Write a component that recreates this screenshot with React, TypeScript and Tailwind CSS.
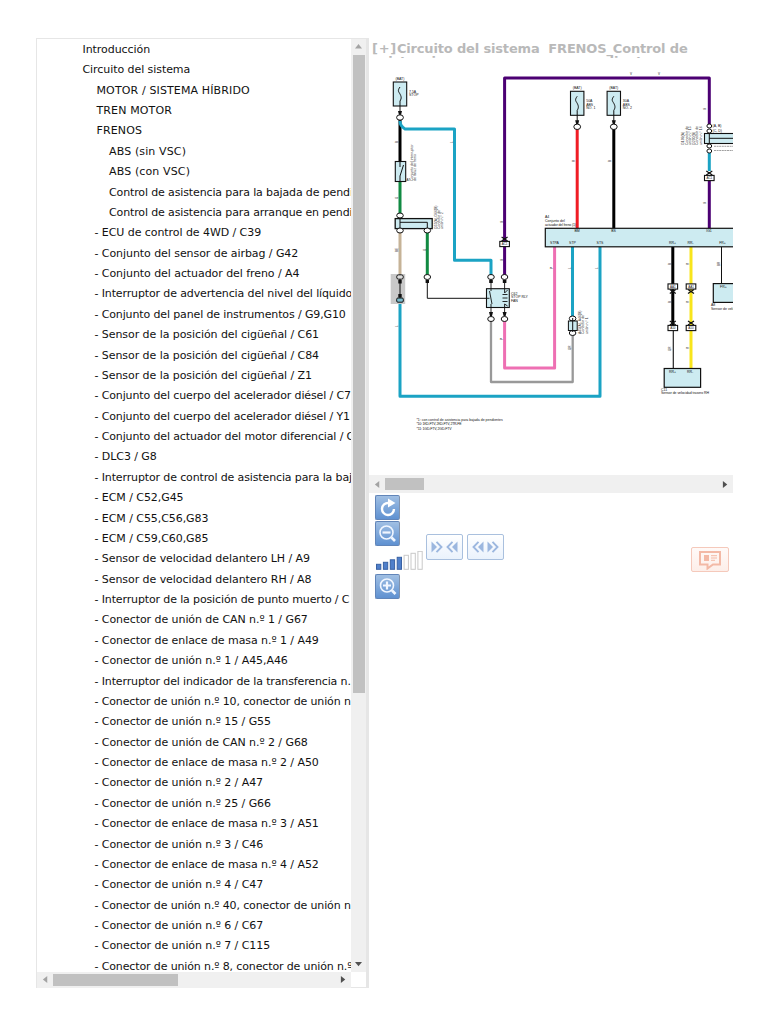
import { clsx } from "clsx";

interface TreeItem {
  label: string;
  level: 0 | 1 | 2 | 3;
}

const sections: TreeItem[] = [
  { label: "Introducción", level: 0 },
  { label: "Circuito del sistema", level: 0 },
  { label: "MOTOR / SISTEMA HÍBRIDO", level: 1 },
  { label: "TREN MOTOR", level: 1 },
  { label: "FRENOS", level: 1 },
  { label: "ABS (sin VSC)", level: 2 },
  { label: "ABS (con VSC)", level: 2 },
  { label: "Control de asistencia para la bajada de pendi", level: 2 },
  { label: "Control de asistencia para arranque en pendi", level: 2 },
];

const parts = [
  "ECU de control de 4WD / C39",
  "Conjunto del sensor de airbag / G42",
  "Conjunto del actuador del freno / A4",
  "Interruptor de advertencia del nivel del líquido",
  "Conjunto del panel de instrumentos / G9,G10",
  "Sensor de la posición del cigüeñal / C61",
  "Sensor de la posición del cigüeñal / C84",
  "Sensor de la posición del cigüeñal / Z1",
  "Conjunto del cuerpo del acelerador diésel / C7",
  "Conjunto del cuerpo del acelerador diésel / Y1",
  "Conjunto del actuador del motor diferencial / C",
  "DLC3 / G8",
  "Interruptor de control de asistencia para la baj",
  "ECM / C52,G45",
  "ECM / C55,C56,G83",
  "ECM / C59,C60,G85",
  "Sensor de velocidad delantero LH / A9",
  "Sensor de velocidad delantero RH / A8",
  "Interruptor de la posición de punto muerto / C",
  "Conector de unión de CAN n.º 1 / G67",
  "Conector de enlace de masa n.º 1 / A49",
  "Conector de unión n.º 1 / A45,A46",
  "Interruptor del indicador de la transferencia n.",
  "Conector de unión n.º 10, conector de unión n",
  "Conector de unión n.º 15 / G55",
  "Conector de unión de CAN n.º 2 / G68",
  "Conector de enlace de masa n.º 2 / A50",
  "Conector de unión n.º 2 / A47",
  "Conector de unión n.º 25 / G66",
  "Conector de enlace de masa n.º 3 / A51",
  "Conector de unión n.º 3 / C46",
  "Conector de enlace de masa n.º 4 / A52",
  "Conector de unión n.º 4 / C47",
  "Conector de unión n.º 40, conector de unión n",
  "Conector de unión n.º 6 / C67",
  "Conector de unión n.º 7 / C115",
  "Conector de unión n.º 8, conector de unión n.º",
];

const items: TreeItem[] = [...sections, ...parts.map((p): TreeItem => ({ label: `- ${p}`, level: 3 }))];

const levelClass = {
  0: "pl-[45.5px]",
  1: "pl-[59.5px]",
  2: "pl-[72px]",
  3: "pl-[57.5px]",
};

// headings in capitals are set a little wider, long rows that run to the edge a little tighter
function trackingFor({ level, label }: TreeItem) {
  if (level === 1 || label.startsWith("ABS")) return "tracking-[0.13px]";
  if (label.length > 43) return "tracking-[-0.13px]";
  return "tracking-[-0.065px]";
}

function Arrow({ dir, color }: { dir: "up" | "down" | "left" | "right"; color: string }) {
  const d = {
    up: "M0 5 4 0 8 5Z",
    down: "M0 1 8 1 4 6Z",
    left: "M6 0 6 8 1 4Z",
    right: "M1 0 1 8 6 4Z",
  };
  return (
    <svg className="h-[7px] w-[7px] shrink-0" viewBox="0 0 8 8" fill={color}>
      <path d={d[dir]} />
    </svg>
  );
}

function TreePanel() {
  return (
    <aside className="flex h-[950px] w-[333px] shrink-0 flex-col border border-r-[3px] border-[#e6e6e6]">
      <div className="flex h-[933px]">
        <ul className="w-[314px] shrink-0 overflow-hidden whitespace-pre pt-[0.4px] text-[11px] text-[#111]">
          {items.map((item, i) => (
            <li key={i} className={clsx("h-[20.38px] leading-[21px]", levelClass[item.level], trackingFor(item))}>
              {item.label}
            </li>
          ))}
        </ul>
        <div className="flex w-4 flex-col items-center bg-[#f0f0f0]">
          <div className="flex h-4 items-center pt-0.5">
            <Arrow dir="up" color="#a3a3a3" />
          </div>
          <div className="h-[638px] w-3 bg-[#c1c1c1]" />
          <div className="mt-auto mb-[4px]">
            <Arrow dir="down" color="#505050" />
          </div>
        </div>
      </div>
      <div className="flex h-4 items-center">
        <div className="flex h-4 w-[314px] items-center bg-[#f0f0f0]">
          <div className="flex w-4 justify-center">
            <Arrow dir="left" color="#a3a3a3" />
          </div>
          <div className="h-3 w-[125px] bg-[#c1c1c1]" />
          <div className="mr-1 ml-auto">
            <Arrow dir="right" color="#505050" />
          </div>
        </div>
      </div>
    </aside>
  );
}

function Fuse({ x, y, name }: { x: number; y: number; name: string[] }) {
  return (
    <g>
      <text x={x} y={y - 2} textAnchor="middle">(BAT)</text>
      <rect x={x - 6.7} y={y} width="13.4" height="24" fill="#cdebf1" stroke="#111" strokeWidth="1.1" />
      <path d={`M${x} ${y + 5}c-3 4 -1 5 0 7s2 4 0 7V${y + 33}`} fill="none" stroke="#111" strokeWidth="1" />
      <path d={`M${x - 2} ${y + 29}h4l-1 4h-2Z`} />
      <ellipse cx={x} cy={y + 35.5} rx="3.4" ry="2.7" fill="#fff" stroke="#111" />
      {name.map((n, i) => (
        <text key={i} x={x + 9} y={y + 11 + i * 3.2}>{n}</text>
      ))}
    </g>
  );
}

function Ring({ x, y }: { x: number; y: number }) {
  return <ellipse cx={x} cy={y} rx="3.3" ry="2.5" fill="#fff" stroke="#111" />;
}

function Plug({ x, y, label, flip = false }: { x: number; y: number; label: string; flip?: boolean }) {
  const t = flip ? y + 5 : y - 5;
  return (
    <g>
      <path d={`M${x - 3} ${t - 2}l3 2 3 -2M${x - 3} ${t + 2}l3 -2 3 2`} fill="none" stroke="#111" strokeWidth="1.2" />
      <rect x={x - 4.8} y={y - 2.6} width="9.6" height="5.2" fill="#fff" stroke="#111" strokeWidth="1.1" />
      <text x={x} y={y + 1.2} fontSize="3" textAnchor="middle">{label}</text>
    </g>
  );
}

function SideLabel({ x, y, lines, step = 3.4 }: { x: number; y: number; lines: string[]; step?: number }) {
  return (
    <g fill="#333">
      {lines.map((l, i) => (
        <text key={i} transform={`translate(${x + i * step} ${y}) rotate(-90)`}>{l}</text>
      ))}
    </g>
  );
}

const rings = [
  [400, 215.5], [400, 230.5], [427.3, 230.5], [427.3, 277],
  [491, 277], [504.5, 277], [491, 319], [504.5, 319],
];

function WiringDiagram() {
  return (
    <svg
      className="block h-[415px] w-[364px]"
      viewBox="369 60 364 415"
      fontSize="3.5"
      fontFamily='"Liberation Sans", Arial, sans-serif'
      fill="#111"
    >
      {/* wires */}
      <g fill="none" strokeWidth="3" strokeLinejoin="round">
        <path d="M400 119V161" stroke="#000" />
        <path d="M400 121Q400 126 405 129H454.5V260.3H491V275" stroke="#1ba3c4" />
        <path d="M504.6 275V78H709.3V124M709.3 181V228" stroke="#4c0073" />
        <path d="M400 182V214M427.3 232V275" stroke="#118a42" />
        <path d="M400 232V275" stroke="#c6b397" />
        <path d="M400 301V396.3H600V247M572.5 247V316M709.3 153V171" stroke="#1ba3c4" />
        <path d="M491 321V382H572.7V333" stroke="#999" strokeWidth="2.3" />
        <path d="M504.6 321V368H554.6V247" stroke="#ee70b3" />
        <path d="M577.2 129V228" stroke="#f01c24" />
        <path d="M613.8 129V228M672.8 247V328" stroke="#000" />
        <path d="M691 247V368" stroke="#f8e51c" />
        <path d="M673.3 328V368" stroke="#222" strokeWidth="1.2" />
      </g>

      <Fuse x={400} y={82} name={["7.5A", "STOP"]} />
      <Fuse x={577.2} y={91.3} name={["50A", "ABS", "NO. 1"]} />
      <Fuse x={613.8} y={91.3} name={["30A", "ABS", "NO. 2"]} />

      {/* stop lamp switch */}
      <rect x="395.3" y="161.5" width="10.4" height="20" fill="#cdebf1" stroke="#111" strokeWidth="1.1" />
      <path d="M400 161v6M400 182v-6l3.5 -11" fill="none" stroke="#111" />
      <SideLabel x={412.5} y={181} lines={["Conjunto del interruptor", "de la luz de freno"]} />
      <text x="406.5" y="181" fontSize="3">A7</text>

      {/* junction connector */}
      <rect x="395.2" y="218.6" width="37" height="10" fill="#cdebf1" stroke="#111" strokeWidth="1.3" />
      <path d="M400 218v11M400 222.3h27.3v7" fill="none" stroke="#111" />
      <SideLabel x={436.5} y={229} lines={["G55(A),G66(B)", "Conector de", "unión n.º 2"]} />

      <rect x="390.7" y="274" width="14.5" height="30" fill="#c9c9c9" />
      <path d="M400 278V300" stroke="#111" />
      <rect x="398.3" y="280" width="3.4" height="3.5" />
      <rect x="398.3" y="294" width="3.4" height="3.5" />
      <rect x="396.7" y="274.8" width="6.6" height="4.4" rx="2" fill="#ddd" stroke="#111" />
      <rect x="396.7" y="298" width="6.6" height="4.2" rx="1.2" fill="#7dbccd" stroke="#111" />

      {rings.map(([x, y]) => (
        <Ring key={`${x}-${y}`} x={x} y={y} />
      ))}
      <path d="M427.3 280V298.3H486.5" fill="none" stroke="#111" />
      <rect x="425.6" y="280" width="3.4" height="3" />

      {/* relay */}
      <rect x="486.5" y="288.7" width="22.8" height="18.8" fill="#cdebf1" stroke="#111" strokeWidth="1.1" />
      <path
        d="M491 280V291M486.5 298.3h3M489.5 291l2.5 13M491 304V315M504.6 280V293M504.6 304V315M504.6 293l3 -3M504.6 304l3 2M502.5 294.5h5M502.5 298h5M502.5 301.5h5"
        fill="none"
        stroke="#111"
        strokeWidth="0.9"
      />
      <path d="M489.2 280h3.6v3h-3.6zM502.8 280h3.6v3h-3.6zM489 312h4l-1 4h-2zM502.6 312h4l-1 4h-2z" />
      <text x="511" y="295">C62</text>
      <text x="511" y="298.4">STOP RLY</text>
      <text x="511" y="301.8">FAN</text>

      <Plug x={504.6} y={244} label="AC1" />

      {/* top-right junction, runs past the visible edge */}
      <rect x="704.5" y="133.5" width="40" height="10" fill="#cdebf1" stroke="#111" strokeWidth="1.1" />
      <path d="M709.3 133v14M709.3 138.3H740" fill="none" stroke="#111" />
      <g fill="#fff" stroke="#111">
        <ellipse cx="709.3" cy="126" rx="2.4" ry="2" />
        <ellipse cx="709.3" cy="131" rx="2.4" ry="2" />
        <ellipse cx="709.3" cy="146" rx="2.4" ry="2" />
        <ellipse cx="709.3" cy="151" rx="2.4" ry="2" />
      </g>
      <path d="M714 146.3H740M714 150.5H740" stroke="#777" strokeWidth="0.7" strokeDasharray="2 0.6" />
      <text x="712.5" y="127.3">(A, B)</text>
      <text x="712.5" y="132">(C, D)</text>
      <SideLabel x={684} y={145} lines={["G199(A)", "Conector de", "unión n.º 15", "G200(B)", "Conector de", "unión n.º 16"]} step={3.6} />
      <Plug x={709.3} y={178} label="AC1" />

      {/* brake actuator */}
      <rect x="545.3" y="228.3" width="200" height="18.5" fill="#cdebf1" stroke="#111" strokeWidth="1.2" />
      <text x="545" y="218">A4</text>
      <text x="545" y="222">Conjunto del</text>
      <text x="545" y="226" textLength="31">actuador del freno (1)</text>
      <g textAnchor="middle">
        <text x="577" y="232">BM</text>
        <text x="613.5" y="232">BS</text>
        <text x="709" y="232">IG1</text>
        <text x="554.5" y="244">STPA</text>
        <text x="572.5" y="244">STP</text>
        <text x="600" y="244">STS</text>
        <text x="672.5" y="244">RR+</text>
        <text x="690.5" y="244">RR-</text>
        <text x="722.5" y="244">FR+</text>
      </g>

      {/* inline connector */}
      <Ring x={572.6} y={318.5} />
      <Ring x={572.6} y={333} />
      <rect x="568.4" y="321" width="8.8" height="9.5" fill="#cdebf1" stroke="#111" />
      <path d="M572.7 318V332" stroke="#111" />
      <SideLabel x={581} y={334} lines={["A45(A), A46(B)", "Conector de", "unión n.º 1"]} />

      <Plug x={672.8} y={286.5} label="AA1" flip />
      <Plug x={691} y={286.5} label="AA1" flip />
      <Plug x={672.8} y={328} label="A10" />
      <Plug x={691} y={328} label="A10" />

      {/* speed sensors */}
      <rect x="664.2" y="368.5" width="36.4" height="18.8" fill="#cdebf1" stroke="#111" strokeWidth="1.2" />
      <text x="669" y="372.5">RR+</text>
      <text x="687" y="372.5">RR-</text>
      <text x="661" y="390.6">C11</text>
      <text x="661" y="394.3" textLength="48">Sensor de velocidad trasero RH</text>
      <path d="M721.5 247V283" stroke="#111" />
      <rect x="713.3" y="283.6" width="30" height="18.8" fill="#cdebf1" stroke="#111" strokeWidth="1.2" />
      <text x="720" y="287.5">FR+</text>
      <text x="711" y="306">A8</text>
      <text x="711" y="310.2">Sensor de velo</text>

      {/* wire colour codes */}
      <g fontSize="3">
        {[
          ["B", 398, 143], ["L", 452.5, 143], ["G", 398, 199], ["BE", 398, 252],
          ["G", 425.5, 251], ["V", 502.8, 223], ["V", 502.8, 261], ["L", 398, 327],
          ["R", 574.5, 162], ["B", 611, 162], ["V", 706, 110], ["V", 706, 204],
          ["P", 552.5, 269], ["L", 570.5, 269], ["L", 598, 269], ["B", 671, 265],
          ["Y", 689, 265], ["BR", 720, 266], ["B", 671, 303], ["Y", 689, 303],
          ["GR", 671, 351], ["Y", 689, 349], ["P", 502.5, 340], ["GR", 571, 350],
        ].map(([t, x, y]) => (
          <text key={`${x}-${y}`} transform={`translate(${x} ${y}) rotate(-90)`}>{t}</text>
        ))}
        <text x="630" y="75">V</text>
        <text x="658" y="75">V</text>
      </g>

      <text x="416.5" y="420.5">*1: con control de asistencia para bajada de pendientes</text>
      <text x="416.5" y="425.2" textLength="45">*10: 1KD-FTV, 2KD-FTV, 2TR-FE</text>
      <text x="416.5" y="429.7" textLength="35">*11: 1GD-FTV, 2GD-FTV</text>
    </svg>
  );
}

const toolClass =
  "flex h-[25px] w-[25px] items-center justify-center rounded-[2px] border border-[#6185b9] border-r-[#8193ae] bg-linear-to-b from-[#a0bfe3] to-[#5f91d1]";

function ZoomTools() {
  return (
    <div className="flex w-12 flex-col">
      <button type="button" className={toolClass}>
        <svg className="h-5 w-5" viewBox="0 0 20 20" fill="none" stroke="#fff" strokeWidth="2.4">
          <path d="M10.5 5A6 6 0 1 0 16 11" />
          <path d="M10 0.5 17.5 5 10 9.5Z" fill="#fff" stroke="none" />
        </svg>
      </button>
      <button type="button" className={clsx(toolClass, "mt-px")}>
        <svg className="h-[21px] w-[21px]" viewBox="0 0 21 21" fill="none" stroke="#f0f6ff" strokeWidth="1.6">
          <circle cx="9.5" cy="9.5" r="6.5" />
          <path d="M5.5 9.5h8" strokeWidth="2.2" />
          <path d="M14.5 14.5l3.5 3.5" strokeWidth="2.6" />
        </svg>
      </button>
      <svg className="mt-[5px] h-[19px] w-12" viewBox="0 0 48 19">
        {[5, 7, 9.5, 12, 14, 16, 18].map((h, i) => (
          <rect
            key={h}
            x={1.5 + i * 6.9}
            y={18.3 - h}
            width="4.3"
            height={h}
            fill={i < 4 ? "#4f7fca" : "#fff"}
            stroke={i < 4 ? "#3962a4" : "#c9c9c9"}
          />
        ))}
      </svg>
      <button type="button" className={clsx(toolClass, "mt-[3.5px]")}>
        <svg className="h-[21px] w-[21px]" viewBox="0 0 21 21" fill="none" stroke="#f0f6ff" strokeWidth="1.6">
          <circle cx="10" cy="9.5" r="6.5" />
          <path d="M6 9.5h8M10 5.5v8" strokeWidth="2.2" />
          <path d="M15 14.5l3.5 3.5" strokeWidth="2.6" />
        </svg>
      </button>
    </div>
  );
}

const navClass =
  "flex h-[26px] w-[37px] items-center justify-center rounded-[2px] border border-[#a9c0de] bg-linear-to-b from-white to-[#eaf2fc]";

// solid triangle with a chevron following it
function Skip({ left = false }: { left?: boolean }) {
  return (
    <svg className={clsx("h-3 w-3", left && "-scale-x-100")} viewBox="0 0 12 12">
      <path d="M0.5 0.5 6 6 0.5 11.5Z" fill="#9cb7df" />
      <path d="M5.5 0.8 10.5 6 5.5 11.2" fill="none" stroke="#9cb7df" strokeWidth="1.9" />
    </svg>
  );
}

// the solid triangle sits on the right here, as on the inner side of the collapse button
function SkipBack() {
  return (
    <svg className="h-3 w-3" viewBox="0 0 12 12">
      <path d="M11.5 0.5 6 6 11.5 11.5Z" fill="#9cb7df" />
      <path d="M6.5 0.8 1.5 6 6.5 11.2" fill="none" stroke="#9cb7df" strokeWidth="1.9" />
    </svg>
  );
}

function Toolbar() {
  return (
    <div className="flex items-start pt-0.5 pl-[6px]">
      <ZoomTools />
      <div className="mt-[39px] ml-[3px] flex gap-1">
        <button type="button" className={clsx(navClass, "gap-[3px]")}>
          <Skip />
          <SkipBack />
        </button>
        <button type="button" className={clsx(navClass, "gap-[3px]")}>
          <SkipBack />
          <Skip />
        </button>
      </div>
      <button
        type="button"
        className="mt-[52px] ml-[187px] flex h-[25px] w-[38px] items-center justify-center rounded-[2px] border border-[#f5c9bb] bg-linear-to-b from-[#fffaf8] to-[#fdeee9]"
      >
        <svg className="h-5 w-6" viewBox="0 0 24 20" fill="none" stroke="#f3b9a6" strokeWidth="2">
          <path d="M2 2H22V14.5H15L9.5 18.5V14.5H2Z" />
          <path d="M6 5h5v6H6z" fill="#f3b9a6" stroke="none" />
          <path d="M13 5.7h6M13 8h6M13 10.3h4" strokeWidth="1" />
        </svg>
      </button>
    </div>
  );
}

export default function App() {
  return (
    <div className='flex h-[1024px] w-[768px] items-start overflow-hidden bg-white pt-[37.5px] pl-9 font-["DejaVu_Sans",Verdana,sans-serif]'>
      <TreePanel />
      <main className="flex w-[364px] flex-col">
        <h1 className="mb-[2px] h-[20.5px] overflow-hidden whitespace-pre pt-[4px] pl-[3px] text-[13px] leading-[13.5px] font-bold tracking-[-0.16px] text-[#b9b9b9]">
          <span className="tracking-[0.7px]">[+]</span>
          {"Circuito del sistema  FRENOS_Control de\nasistencia para arranque en pendientes"}
        </h1>
        <WiringDiagram />
        <div className="flex h-[18px] items-center bg-[#f0f0f0]">
          <div className="flex w-4 justify-center">
            <Arrow dir="left" color="#a3a3a3" />
          </div>
          <div className="h-3 w-[39px] bg-[#c1c1c1]" />
          <div className="mr-1 ml-auto">
            <Arrow dir="right" color="#505050" />
          </div>
        </div>
        <Toolbar />
      </main>
    </div>
  );
}
